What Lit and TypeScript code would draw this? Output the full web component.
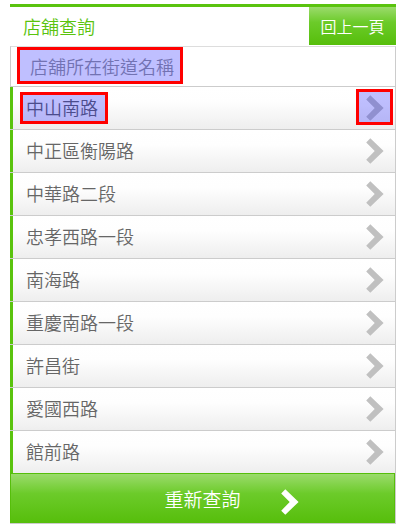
import { LitElement, html, css, svg } from "lit";
import { customElement, property } from "lit/decorators.js";

const chevron = html`<svg class="chevron" viewBox="0 0 18 26" aria-hidden="true">
  ${svg`<path d="M4.3 0.3 L17.6 13 L4.3 25.7 L0.2 21.7 L8.7 13 L0.2 4.5 Z" fill="currentColor" />`}
</svg>`;

const shared = css`
  * {
    box-sizing: border-box;
  }
  .chevron {
    display: block;
    width: 18px;
    height: 26px;
    flex: none;
  }
  .mark {
    position: absolute;
    border: 3px solid #f00;
    background: rgba(0, 0, 255, 0.25);
    pointer-events: none;
  }
`;

@customElement("street-row")
class StreetRow extends LitElement {
  @property() name = "";
  @property({ type: Boolean }) marked = false;

  static styles = [
    shared,
    css`
      :host {
        display: block;
      }
      .row {
        display: flex;
        align-items: center;
        justify-content: space-between;
        height: 42px;
        padding: 0 11px 0 13px;
        border-left: 3px solid #5ac30e;
        border-right: 1px solid #ccc;
        background: linear-gradient(#fff 0%, #fefefe 35%, #eee 100%);
        color: #666;
        text-decoration: none;
      }
      .name,
      .arrow {
        position: relative;
      }
      .name {
        padding-bottom: 2px;
      }
      .arrow {
        color: #c0c0c0;
      }
      .name-mark {
        inset: -1px -10px -1px -6px;
      }
      .arrow-mark {
        inset: -6px -9px -4px -10px;
      }
    `,
  ];

  render() {
    return html`<a class="row" href="#">
      <span class="name">${this.name}${this.marked ? html`<span class="mark name-mark"></span>` : ""}</span>
      <span class="arrow">${chevron}${this.marked ? html`<span class="mark arrow-mark"></span>` : ""}</span>
    </a>`;
  }
}

@customElement("app-root")
class AppRoot extends LitElement {
  private streets = [
    "中山南路",
    "中正區衡陽路",
    "中華路二段",
    "忠孝西路一段",
    "南海路",
    "重慶南路一段",
    "許昌街",
    "愛國西路",
    "館前路",
  ];

  static styles = [
    shared,
    css`
      :host {
        display: block;
        padding: 4px 10px 6px;
        background: #fff;
        font: 350 18px/28px "Noto Sans CJK TC", sans-serif;
      }
      .header {
        display: flex;
        justify-content: space-between;
        height: 42px;
        border-top: 3px solid #5ac30e;
      }
      .title {
        margin: 0;
        padding: 5px 13px;
        color: #5ac30e;
        font-size: 18px;
        font-weight: inherit;
      }
      button {
        border: 0;
        padding: 0;
        color: #fff;
        font-family: inherit;
        font-weight: inherit;
        background: linear-gradient(#9bdb6c 0%, #6ccb2a 40%, #56be0b 100%);
      }
      .back {
        width: 87px;
        height: 38px;
        font-size: 16px;
      }
      .caption {
        display: flex;
        align-items: center;
        height: 41px;
        margin: 0;
        padding-left: 19px;
        border: 1px solid #ccc;
        border-top-color: #ddd;
        color: #999;
        font-size: 18px;
        font-weight: inherit;
      }
      .caption-text {
        position: relative;
        padding-bottom: 2px;
      }
      .caption-mark {
        inset: -5px -9px -2px -13px;
      }
      .list {
        margin: 0;
        padding: 0;
        list-style: none;
      }
      .item + .item {
        border-top: 1px solid #ccc;
      }
      .footer {
        border: solid #ccc;
        border-width: 0 1px 1px 0;
      }
      .again {
        display: grid;
        grid-template-columns: 1fr auto 1fr;
        align-items: center;
        width: 100%;
        height: 50px;
        padding-top: 6px;
        border: 1px solid #56be0b;
        border-bottom: 0;
        font-size: 19px;
      }
      .again-text {
        grid-column: 2;
        padding-bottom: 6px;
      }
      .again .chevron {
        margin-left: 40px;
      }
    `,
  ];

  render() {
    return html`
      <header class="header">
        <h1 class="title">店舖查詢</h1>
        <button class="back" type="button">回上一頁</button>
      </header>
      <main>
        <h2 class="caption">
          <span class="caption-text">店舖所在街道名稱<span class="mark caption-mark"></span></span>
        </h2>
        <ul class="list">
          ${this.streets.map(
            (name, i) => html`<li class="item"><street-row .name=${name} .marked=${i === 0}></street-row></li>`
          )}
        </ul>
      </main>
      <footer class="footer">
        <button class="again" type="button"><span class="again-text">重新查詢</span>${chevron}</button>
      </footer>
    `;
  }
}
